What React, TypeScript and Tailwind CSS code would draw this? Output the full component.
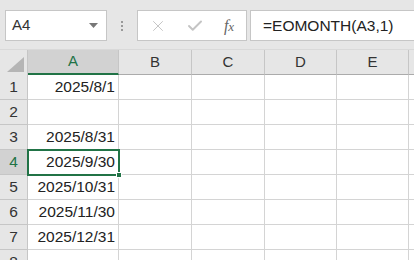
import { X, Check } from 'lucide-react';

const cols = [
  { key: 'A', w: 'w-[91px]' },
  { key: 'B', w: 'w-[73px]' },
  { key: 'C', w: 'w-[73px]' },
  { key: 'D', w: 'w-[72px]' },
  { key: 'E', w: 'w-[72px]' },
];

const rows = ['2025/8/1', '', '2025/8/31', '2025/9/30', '2025/10/31', '2025/11/30', '2025/12/31', ''];

const font = { fontFamily: '"Liberation Sans", "Noto Sans CJK JP", sans-serif' };

export default function App() {
  return (
    <div className="w-[414px] h-[260px] overflow-hidden bg-white text-[#222]" style={font}>
      {/* 数式バー */}
      <div className="h-[50px] bg-[#e6e6e6] flex items-start pt-[10px] border-b border-[#d9d9d9]">
        <div className="ml-[5px] w-[102px] h-[31px] bg-white border border-[#c6c6c6] flex items-center pl-[6px] pr-[8px]">
          <span className="text-[15px] text-[#333] flex-1">A4</span>
          <svg width="9" height="5" viewBox="0 0 9 5"><path d="M0 0h9L4.5 5z" fill="#777" /></svg>
        </div>
        <div className="w-[30px] h-[31px] flex flex-col items-center justify-center gap-[2px]">
          <div className="w-[2px] h-[2px] bg-[#999]" />
          <div className="w-[2px] h-[2px] bg-[#999]" />
          <div className="w-[2px] h-[2px] bg-[#999]" />
        </div>
        <div className="w-[110px] h-[31px] bg-white border border-[#c6c6c6] flex items-center">
          <div className="w-[38px] flex justify-center pl-[2px]">
            <X className="w-[18px] h-[18px] text-[#c4c4c4]" strokeWidth={1.3} />
          </div>
          <div className="w-[38px] flex justify-center">
            <Check className="w-[18px] h-[18px] text-[#c4c4c4]" strokeWidth={2.6} />
          </div>
          <div className="w-[30px] flex justify-center">
            <span className="text-[16px] italic text-[#666]" style={{ fontFamily: '"Liberation Serif", serif' }}>
              f<span className="text-[13px]">x</span>
            </span>
          </div>
        </div>
        <div className="ml-[3px] flex-1 h-[31px] bg-white border border-[#c6c6c6] border-r-0 flex items-center pl-[12px]">
          <span className="text-[15.5px] text-[#222]">=EOMONTH(A3,1)</span>
        </div>
      </div>

      {/* 列見出し */}
      <div className="flex h-[25px] bg-[#e6e6e6]">
        <div className="w-[28px] shrink-0 border-r border-[#c6c6c6] flex items-end justify-end pr-[3px] pb-[3px]">
          <svg width="17" height="15" viewBox="0 0 17 15"><path d="M17 0v15H0z" fill="#b5b5b5" /></svg>
        </div>
        {cols.map((c) => (
          <div
            key={c.key}
            className={`${c.w} shrink-0 border-r border-[#c6c6c6] flex items-center justify-center text-[15px] ${
              c.key === 'A' ? 'bg-[#d2d2d2] text-[#217346] border-b-2 border-b-[#217346]' : 'text-[#333] border-b border-b-[#ababab]'
            }`}
          >
            {c.key}
          </div>
        ))}
        <div className="flex-1 border-b border-b-[#ababab]" />
      </div>

      {/* セル */}
      {rows.map((v, i) => {
        const sel = i === 3;
        return (
          <div key={i} className="flex h-[25px]">
            <div
              className={`w-[28px] shrink-0 border-r border-b border-[#c6c6c6] flex items-center justify-center text-[15.5px] ${
                sel ? 'bg-[#d2d2d2] text-[#217346]' : 'bg-[#e6e6e6] text-[#333]'
              }`}
            >
              {i + 1}
            </div>
            <div
              className={`relative w-[91px] shrink-0 border-r border-b border-[#d4d4d4] flex items-center justify-end pr-[3px] text-[15.5px] ${
                sel ? 'outline-2 outline-[#217346] -outline-offset-1 z-10' : ''
              }`}
            >
              {v}
              {sel && <div className="absolute right-[-4px] bottom-[-4px] w-[6px] h-[6px] bg-[#217346] border border-white" />}
            </div>
            {cols.slice(1).map((c) => (
              <div key={c.key} className={`${c.w} shrink-0 border-r border-b border-[#d4d4d4]`} />
            ))}
            <div className="flex-1 border-b border-[#d4d4d4]" />
          </div>
        );
      })}
    </div>
  );
}
